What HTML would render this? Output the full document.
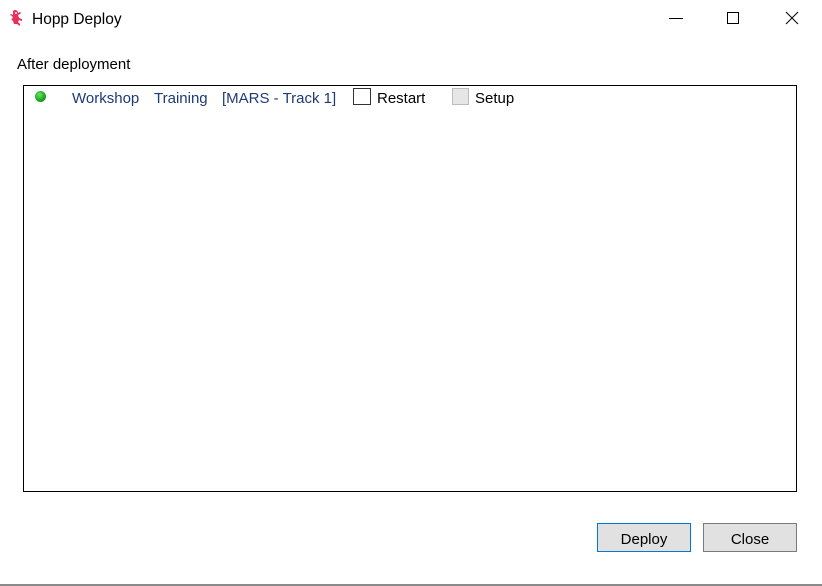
<!DOCTYPE html>
<html><head><style>
body{margin:0;width:822px;height:586px;background:#fff;font-family:"Segoe UI","Liberation Sans",sans-serif;font-size:15px;position:relative;overflow:hidden;color:#000}
.a{position:absolute;white-space:nowrap}
.blue{color:#1e3a78}
.btn{position:absolute;top:523px;width:92px;height:27px;background:#e1e1e1;border:1px solid #7a7a7a;text-align:center;line-height:31px;font-size:15px}
</style></head><body>
<svg class="a" style="left:7px;top:8px" width="20" height="20" viewBox="0 0 20 20">
<path d="M6 3c2-2 5-1 5 2l2-1c1 0 1 2 0 2l-2 1 1 3 3 1v2l-3-1-1 2 2 2v2l-3-2H7l-1-3-2-2 2-1-1-2-2-1 1-1 2 1z" fill="#e8305a"/>
<circle cx="9" cy="5" r="1" fill="#fff"/>
</svg>
<div class="a" style="left:32px;top:11px;font-size:15.5px">Hopp Deploy</div>
<div class="a" style="left:669px;top:18px;width:14px;height:1px;background:#000"></div>
<div class="a" style="left:727px;top:12px;width:10px;height:10px;border:1px solid #000"></div>
<svg class="a" style="left:785px;top:11px" width="14" height="14"><path d="M1 1L13 13M13 1L1 13" stroke="#000" stroke-width="1"/></svg>
<div class="a" style="left:17px;top:56px">After deployment</div>
<div class="a" style="left:23px;top:85px;width:772px;height:405px;border:1px solid #000"></div>
<div class="a" style="left:35px;top:91px;width:11px;height:11px;border-radius:50%;background:radial-gradient(circle at 40% 35%,#6be06b,#17a317 60%,#0c7a0c)"></div>
<div class="a blue" style="left:72px;top:90px">Workshop</div>
<div class="a blue" style="left:154px;top:90px">Training</div>
<div class="a blue" style="left:222px;top:90px">[MARS - Track 1]</div>
<div class="a" style="left:353px;top:88px;width:18px;height:17px;border:1px solid #333;box-sizing:border-box"></div>
<div class="a" style="left:377px;top:90px">Restart</div>
<div class="a" style="left:452px;top:88px;width:17px;height:17px;border:1px solid #bcbcbc;background:#e6e6e6;box-sizing:border-box"></div>
<div class="a" style="left:475px;top:90px">Setup</div>
<div class="btn" style="left:597px;border-color:#0078d7">Deploy</div>
<div class="btn" style="left:703px">Close</div>
<div class="a" style="left:0;top:584px;width:822px;height:2px;background:#8a8a8a"></div>
</body></html>
